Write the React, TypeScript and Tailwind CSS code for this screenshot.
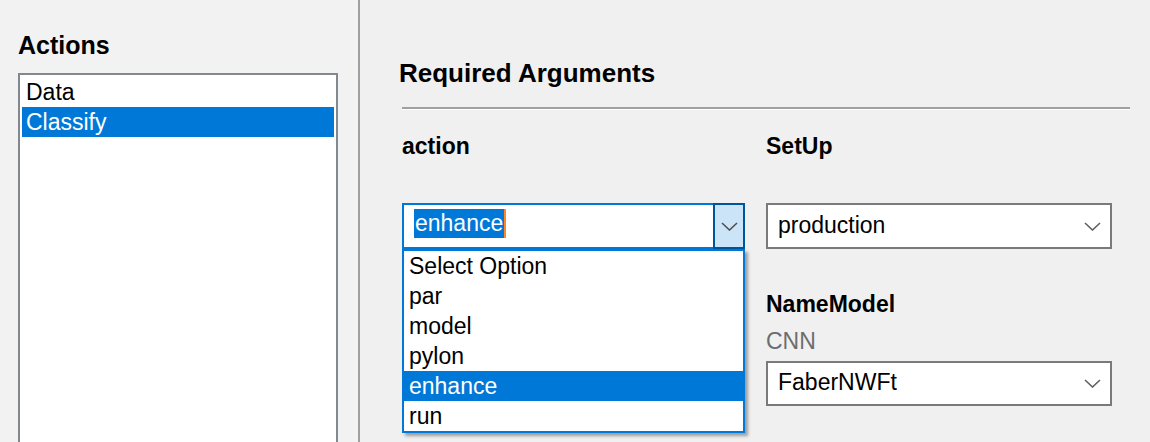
import React from 'react';

const actions = ['Data', 'Classify'];
const options = ['Select Option', 'par', 'model', 'pylon', 'enhance', 'run'];

function Chevron({ color = '#606060' }: { color?: string }) {
  return (
    <svg width="17" height="9" viewBox="0 0 17 9" fill="none">
      <polyline points="1,1 8.5,8 16,1" stroke={color} strokeWidth="1.6" />
    </svg>
  );
}

function Select({ value, tall = 46 }: { value: string; tall?: number }) {
  return (
    <div
      className={`flex items-center justify-between w-[346px] border-2 border-[#7a7a7a] bg-white pl-[10px] pr-[9px] ${
        tall === 46 ? 'h-[46px]' : 'h-[45px]'
      }`}
    >
      <span className="text-[23px] leading-[23px] -mt-[2px]">{value}</span>
      <Chevron />
    </div>
  );
}

export default function App() {
  return (
    <div className="flex w-[1150px] h-[442px] overflow-hidden font-['Liberation_Sans',Arial,sans-serif] text-black">
      {/* Left: actions list */}
      <aside className="w-[358px] shrink-0 bg-[#f2f2f2] pl-[18px] pt-[33px]">
        <h2 className="text-[25px] leading-[25px] font-bold">Actions</h2>
        <div className="mt-[15px] w-[320px] h-[400px] border-2 border-[#828790] bg-white p-[2px]">
          {actions.map((a) => (
            <div
              key={a}
              className={`h-[30px] px-[4px] text-[23px] leading-[30px] ${
                a === 'Classify' ? 'bg-[#0078d7] text-white' : ''
              }`}
            >
              {a}
            </div>
          ))}
        </div>
      </aside>

      <div className="w-[2px] shrink-0 bg-[#a0a0a0]" />

      {/* Right: arguments */}
      <main className="flex-1 bg-[#f0f0f0] pl-[39px] pr-[20px] pt-[60px]">
        <h2 className="text-[26px] leading-[26px] font-bold">Required Arguments</h2>
        <div className="ml-[3px] mt-[21px] h-[3px] border-t-2 border-b border-t-[#a0a0a0] border-b-white" />

        <div className="ml-[3px] flex gap-[21px]">
          <div className="w-[343px]">
            <div className="mt-[25px] text-[23px] leading-[23px] font-bold">action</div>
            <div className="relative mt-[45px] h-[46px] border-2 border-[#0078d7] bg-white">
              <div className="flex items-center h-full pl-[10px]">
                <span className="flex items-center h-[29px] -mt-[5px] pl-[1px] bg-[#0078d7] text-white text-[23px] leading-[23px]">
                  enhance
                  <span className="ml-[1px] w-[2px] h-full bg-[#ff8728]" />
                </span>
              </div>
              <div className="absolute -top-[2px] -right-[2px] -bottom-[2px] w-[32px] flex items-center justify-center border-2 border-[#005499] bg-[#cce4f7]">
                <Chevron color="#505050" />
              </div>

              {/* Open dropdown */}
              <div className="absolute left-[-2px] right-[-2px] top-full mt-[2px] z-10 border-2 border-[#0078d7] bg-white shadow-[3px_3px_3px_rgba(0,0,0,0.35)]">
                {options.map((o) => (
                  <div
                    key={o}
                    className={`h-[30px] px-[5px] text-[23px] leading-[30px] ${
                      o === 'enhance' ? 'bg-[#0078d7] text-white' : ''
                    }`}
                  >
                    {o}
                  </div>
                ))}
              </div>
            </div>
          </div>

          <div className="w-[346px]">
            <div className="mt-[25px] text-[23px] leading-[23px] font-bold">SetUp</div>
            <div className="mt-[45px]">
              <Select value="production" />
            </div>
            <div className="mt-[44px] text-[23px] leading-[23px] font-bold">NameModel</div>
            <div className="mt-[14px] text-[23px] leading-[23px] text-[#6d6d6d]">CNN</div>
            <div className="mt-[8px]">
              <Select value="FaberNWFt" tall={45} />
            </div>
          </div>
        </div>
      </main>
    </div>
  );
}
